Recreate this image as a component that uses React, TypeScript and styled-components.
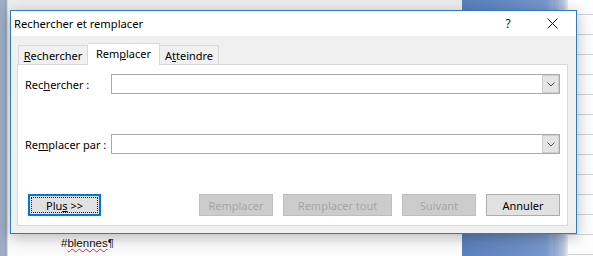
import React from "react";
import styled, { createGlobalStyle, css } from "styled-components";

const GlobalStyle = createGlobalStyle`
  html, body {
    margin: 0;
    padding: 0;
  }
  body {
    width: 593px;
    height: 256px;
    overflow: hidden;
    font-family: "Segoe UI", "Noto Sans", "Open Sans", sans-serif;
  }
`;

export default function App() {
  return (
    <>
      <GlobalStyle />
      <Desktop>
        <LeftStrip />
        <DocArea>
          <DocLine>
            #<Misspelled>blennes</Misspelled>¶
          </DocLine>
        </DocArea>
        <BlueColumn />
        <Gutter />
        <LinedArea />

        <Dialog>
          <TitleBar>
            <Title>Rechercher et remplacer</Title>
            <HelpMark>?</HelpMark>
            <CloseButton>
              <svg width="11" height="11" viewBox="0 0 11 11">
                <path d="M0.5 0.5 L10.5 10.5 M10.5 0.5 L0.5 10.5" stroke="#111" strokeWidth="1" />
              </svg>
            </CloseButton>
          </TitleBar>

          <Body>
            <TabStrip>
              <Tab $width={70}>
                <u>R</u>echercher
              </Tab>
              <Tab $width={72} $active>
                Rem<u>p</u>lacer
              </Tab>
              <Tab $width={59}>
                A<u>t</u>teindre
              </Tab>
            </TabStrip>

            <Panel>
              <FormRow>
                <Label>
                  Rec<u>h</u>ercher :
                </Label>
                <Combo>
                  <ComboText />
                  <DropButton>
                    <svg width="8" height="5" viewBox="0 0 8 5">
                      <polyline points="0.5,0.5 4,4 7.5,0.5" fill="none" stroke="#555" strokeWidth="1" />
                    </svg>
                  </DropButton>
                </Combo>
              </FormRow>

              <FormRow $spaced>
                <Label>
                  Re<u>m</u>placer par :
                </Label>
                <Combo>
                  <ComboText />
                  <DropButton>
                    <svg width="8" height="5" viewBox="0 0 8 5">
                      <polyline points="0.5,0.5 4,4 7.5,0.5" fill="none" stroke="#555" strokeWidth="1" />
                    </svg>
                  </DropButton>
                </Combo>
              </FormRow>

              <ButtonRow>
                <Button $width={73} $focused>
                  Plu<u>s</u> &gt;&gt;
                </Button>
                <Spacer />
                <Button $width={74} disabled>
                  Remplacer
                </Button>
                <Button $width={109} disabled>
                  Remplacer tout
                </Button>
                <Button $width={74} disabled>
                  Suivant
                </Button>
                <Button $width={74}>Annuler</Button>
              </ButtonRow>
            </Panel>
          </Body>
        </Dialog>
      </Desktop>
    </>
  );
}

const Desktop = styled.div`
  position: relative;
  width: 593px;
  height: 256px;
  display: flex;
  overflow: hidden;
  background: #f6f6f6;
`;

const LeftStrip = styled.div`
  width: 8px;
  flex-shrink: 0;
  background: linear-gradient(to right, #9eadc4 0, #9eadc4 5px, #7d90ad 6px, #d4dbe5 7px);
`;

const DocArea = styled.div`
  width: 454px;
  flex-shrink: 0;
  box-sizing: border-box;
  display: flex;
  align-items: flex-end;
  padding: 0 0 6px 53px;
  background: linear-gradient(to bottom, #ececec 0, #f0f0f0 10px, #fbfbfb 230px);
`;

const DocLine = styled.span`
  font-family: "Liberation Sans", Arial, sans-serif;
  font-size: 11.5px;
  line-height: 14px;
  color: #111;
`;

const Misspelled = styled.span`
  text-decoration: underline wavy #d9302c;
  text-decoration-thickness: 1px;
  text-underline-offset: 1px;
`;

const BlueColumn = styled.div`
  width: 91px;
  flex-shrink: 0;
  background: linear-gradient(to right, #5a7fbb 0, #6b8dc5 60%, #7898cb 92%, #93acd3 100%);
`;

const Gutter = styled.div`
  width: 15px;
  flex-shrink: 0;
  background: linear-gradient(to right, #8aa3cb, #b8c6db 70%, #e6ebf2);
`;

const LinedArea = styled.div`
  flex: 1;
  background: repeating-linear-gradient(
    to bottom,
    #fdfdfd 0,
    #fdfdfd 14px,
    #cfd3d8 14px,
    #cfd3d8 15px,
    #fdfdfd 15px,
    #fdfdfd 20px
  );
`;

const Dialog = styled.div`
  position: absolute;
  left: 10px;
  top: 10px;
  width: 567px;
  height: 224px;
  box-sizing: border-box;
  display: flex;
  flex-direction: column;
  border: 1px solid #2f7bc0;
  background: #f0f0f0;
  box-shadow: 0 3px 14px rgba(0, 0, 0, 0.28);
  font-size: 11px;
`;

const TitleBar = styled.div`
  height: 25px;
  display: flex;
  align-items: center;
  background: #fff;
  padding-left: 3px;
`;

const Title = styled.span`
  flex: 1;
  font-size: 11.2px;
  color: #000;
`;

const HelpMark = styled.span`
  width: 14px;
  margin-right: 32px;
  text-align: center;
  font-size: 12px;
  color: #111;
`;

const CloseButton = styled.span`
  width: 11px;
  height: 11px;
  margin-right: 18px;
  display: flex;
`;

const Body = styled.div`
  flex: 1;
  display: flex;
  flex-direction: column;
  padding: 7px 8px 7px 6px;
`;

const TabStrip = styled.div`
  height: 21px;
  display: flex;
  align-items: flex-end;
  padding-left: 1px;
`;

const Tab = styled.div<{ $width: number; $active?: boolean }>`
  width: ${({ $width }) => $width}px;
  box-sizing: border-box;
  height: 19px;
  display: flex;
  align-items: center;
  justify-content: center;
  color: #000;
  background: #f0f0f0;
  border: 1px solid #d9d9d9;
  border-bottom: none;

  & + & {
    border-left: none;
  }

  ${({ $active }) =>
    $active &&
    css`
      height: 22px;
      margin-bottom: -1px;
      background: #fff;
      position: relative;
      z-index: 1;
      padding-bottom: 3px;
      border-left: 1px solid #d9d9d9;
    `}
`;

const Panel = styled.div`
  flex: 1;
  display: flex;
  flex-direction: column;
  background: #fff;
  border: 1px solid #d9d9d9;
  padding: 9px 7px 9px 7px;
`;

const FormRow = styled.div<{ $spaced?: boolean }>`
  display: grid;
  grid-template-columns: 86px 1fr;
  align-items: center;
  height: 20px;
  margin-top: ${({ $spaced }) => ($spaced ? "40px" : "0")};
`;

const Label = styled.label`
  color: #000;
  white-space: nowrap;
`;

const Combo = styled.div`
  height: 20px;
  box-sizing: border-box;
  display: flex;
  border: 1px solid #a9a9a9;
  background: #fff;
`;

const ComboText = styled.div`
  flex: 1;
`;

const DropButton = styled.div`
  width: 17px;
  box-sizing: border-box;
  display: flex;
  align-items: center;
  justify-content: center;
  background: #e4e4e4;
  border: 1px solid #cfcfcf;
`;

const ButtonRow = styled.div`
  display: flex;
  gap: 10px;
  margin-top: 40px;
  padding-left: 3px;
`;

const Spacer = styled.div`
  flex: 1;
`;

const Button = styled.button<{ $width: number; $focused?: boolean }>`
  position: relative;
  width: ${({ $width }) => $width}px;
  height: 22px;
  box-sizing: border-box;
  padding: 0;
  font-family: inherit;
  font-size: 11px;
  color: #000;
  background: #e1e1e1;
  border: 1px solid #adadad;

  &:disabled {
    color: #a6a6a6;
    background: #cccccc;
    border-color: #bfbfbf;
  }

  ${({ $focused }) =>
    $focused &&
    css`
      border: 2px solid #0078d7;
      &::after {
        content: "";
        position: absolute;
        inset: 1px;
        border: 1px dotted #222;
      }
    `}
`;
